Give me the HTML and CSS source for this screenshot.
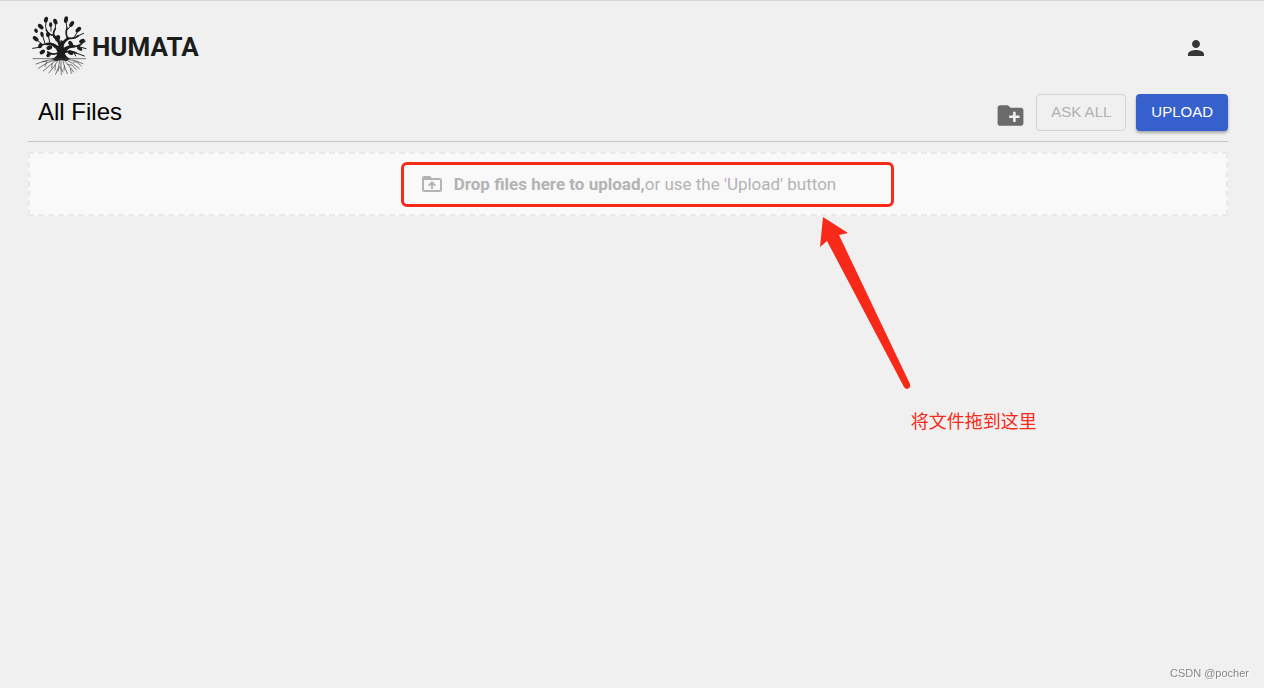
FILE: index.html
```html
<!DOCTYPE html>
<html lang="en">
<head>
  <meta charset="UTF-8">
  <meta name="viewport" content="width=device-width, initial-scale=1.0">
  <title>Humata</title>
  <link rel="stylesheet" href="styles.css">
</head>
<body>
  <header class="topbar">
    <a class="brand" href="#">
      <svg class="brand-logo" viewBox="0 0 192 198" aria-hidden="true">
        <!-- trunk -->
        <path fill="#1c1c1c" d="M72 140 Q88 136 88 121 Q87 111 74 103 L80 97 Q90 105 94 101 Q98 94 98 84 L107 88 Q104 101 108 108 Q116 107 126 99 L131 104 Q114 115 111 124 Q112 134 126 140 L116 147 L99 144 L83 148 Z"/>
        <!-- branches -->
        <g fill="none" stroke="#1c1c1c" stroke-linecap="round">
          <path stroke-width="8" d="M90 109 Q78 94 57 96 M96 105 Q95 86 79 74 M103 101 Q107 86 121 79 M106 112 Q122 102 137 103"/>
          <path stroke-width="5" d="M58 96 Q42 95 34 106 M79 74 Q73 63 82 50 M79 70 Q62 70 55 54 M120 80 Q111 66 117 48 M121 79 Q142 81 151 71 M137 103 Q149 105 160 96 M88 124 Q74 130 59 120 M111 121 Q128 114 144 123"/>
          <path stroke-width="3" d="M55 54 Q51 44 54 30 M82 50 L82 36 M69 57 L69 44 M117 48 L114 30 M117 54 L130 40 M148 73 L167 64 M137 79 L149 58 M160 96 L172 88 M150 103 L174 110 M144 123 L169 132 M34 106 L14 109 M43 97 L26 83 M51 94 L44 72 M66 95 L61 72 M70 126 L62 135 M98 94 L90 82 M137 119 L143 132"/>
        </g>
        <!-- leaves -->
        <g fill="#1c1c1c">
          <ellipse cx="54" cy="23" rx="6" ry="9" transform="rotate(12 54 23)"/>
          <ellipse cx="38" cy="44" rx="6" ry="10" transform="rotate(-45 38 44)"/>
          <ellipse cx="68" cy="38" rx="5" ry="7"/>
          <ellipse cx="82" cy="29" rx="6" ry="9" transform="rotate(-20 82 29)"/>
          <ellipse cx="114" cy="23" rx="6" ry="10" transform="rotate(8 114 23)"/>
          <ellipse cx="131" cy="36" rx="6" ry="10" transform="rotate(32 131 36)"/>
          <ellipse cx="151" cy="53" rx="6" ry="10" transform="rotate(45 151 53)"/>
          <ellipse cx="23" cy="80" rx="6" ry="10" transform="rotate(-50 23 80)"/>
          <ellipse cx="24" cy="56" rx="5" ry="7" transform="rotate(-30 24 56)"/>
          <ellipse cx="42" cy="67" rx="5" ry="8" transform="rotate(-15 42 67)"/>
          <ellipse cx="60" cy="68" rx="6" ry="8" transform="rotate(-10 60 68)"/>
          <ellipse cx="89" cy="79" rx="7" ry="10" transform="rotate(15 89 79)"/>
          <ellipse cx="162" cy="87" rx="6" ry="9" transform="rotate(65 162 87)"/>
          <ellipse cx="128" cy="95" rx="6" ry="9" transform="rotate(-35 128 95)"/>
          <ellipse cx="155" cy="110" rx="5" ry="9" transform="rotate(-60 155 110)"/>
          <ellipse cx="128" cy="122" rx="6" ry="9" transform="rotate(-65 128 122)"/>
          <ellipse cx="64" cy="107" rx="6" ry="9" transform="rotate(65 64 107)"/>
          <ellipse cx="37" cy="101" rx="6" ry="8" transform="rotate(25 37 101)"/>
          <ellipse cx="43" cy="120" rx="6" ry="9" transform="rotate(60 43 120)"/>
          <ellipse cx="61" cy="128" rx="5" ry="8" transform="rotate(35 61 128)"/>
        </g>
        <!-- ground and roots -->
        <g fill="none" stroke="#3a3a3a" stroke-width="2" stroke-linecap="round">
          <path d="M15 140 H173"/>
          <path d="M80 142 Q53 143 24 156 M83 143 Q57 149 31 169 M86 143 Q69 157 46 177 M90 144 Q81 162 63 183 M95 144 Q95 165 83 187 M99 144 Q98 164 100 188 M104 144 Q109 166 118 185 M108 144 Q121 158 137 180 M112 143 Q135 151 154 170 M116 142 Q142 143 165 155"/>
          <path d="M57 148 L43 149 M56 151 L51 163 M72 155 L71 168 M82 159 L81 174 M94 164 L90 177 M98 167 L105 180 M109 163 L108 175 M119 158 L132 159 L145 174 M136 150 L147 150 L160 162 M127 169 L130 184"/>
        </g>
      </svg>
      <span class="brand-name">HUMATA</span>
    </a>
    <button class="icon-button" type="button" aria-label="Account">
      <svg class="icon-person" viewBox="0 0 24 24" aria-hidden="true">
        <path d="M12 12c2.21 0 4-1.79 4-4s-1.79-4-4-4-4 1.79-4 4 1.79 4 4 4zm0 2c-2.67 0-8 1.34-8 4v2h16v-2c0-2.66-5.33-4-8-4z"/>
      </svg>
    </button>
  </header>

  <main class="files">
    <div class="toolbar">
      <h1 class="title">All Files</h1>
      <div class="actions">
        <button class="icon-button new-folder" type="button" aria-label="New folder">
          <svg class="icon-folder" viewBox="0 0 24 24" aria-hidden="true">
            <path d="M20 6h-8l-2-2H4c-1.11 0-1.99.89-1.99 2L2 18c0 1.11.89 2 2 2h16c1.11 0 2-.89 2-2V8c0-1.11-.89-2-2-2zm-1 8h-3v3h-2v-3h-3v-2h3V9h2v3h3v2z"/>
          </svg>
        </button>
        <button class="btn btn-outlined" type="button" disabled>ASK ALL</button>
        <button class="btn btn-primary" type="button">UPLOAD</button>
      </div>
    </div>

    <section class="dropzone">
      <div class="drop-hint">
        <svg class="icon-upload" viewBox="0 0 24 24" aria-hidden="true">
          <path d="M20 6h-8l-2-2H4c-1.1 0-1.99.9-1.99 2L2 18c0 1.1.9 2 2 2h16c1.1 0 2-.9 2-2V8c0-1.1-.9-2-2-2zm0 12H4V8h16v10zM8 13.01l1.41 1.41L11 12.84V17h2v-4.16l1.59 1.59L16 13.01 12.01 9 8 13.01z"/>
        </svg>
        <p class="drop-text"><strong>Drop files here to upload,</strong>or use the 'Upload' button</p>

        <!-- red marks over the drop area -->
        <div class="note-frame"></div>
        <svg class="note-arrow" viewBox="0 0 92 172" aria-hidden="true">
          <path d="M4 0 L29 16 L20 18 L91 167 Q92 171 88 172 Q86 172 85 170 L8 24 L1 30 Z"/>
        </svg>
        <p class="note-text" lang="zh-CN">将文件拖到这里</p>
      </div>
    </section>
  </main>

  <div class="watermark">CSDN @pocher</div>
</body>
</html>
```
FILE: styles.css
```css
* {
  box-sizing: border-box;
  margin: 0;
  padding: 0;
}

body {
  min-height: 100vh;
  background-color: #f0f0f0;
  border-top: 1px solid #d6d6d6;
  color: #000;
  font-family: "Liberation Sans", Arial, sans-serif;
}

.topbar {
  display: flex;
  justify-content: space-between;
  align-items: center;
  padding: 11px 56px 0 28px;
}

.brand {
  display: flex;
  align-items: center;
  color: #1c1c1c;
  text-decoration: none;
}

.brand-logo {
  width: 64px;
  height: 66px;
}

.brand-name {
  padding-top: 4px;
  font-family: Roboto, "Liberation Sans", sans-serif;
  font-size: 26px;
  font-weight: 700;
  line-height: 32px;
}

.icon-button {
  display: flex;
  background: none;
  border: none;
  cursor: pointer;
}

.icon-person {
  width: 24px;
  height: 24px;
  margin-top: 6px;
  fill: #363636;
}

.files {
  padding: 0 36px 0 28px;
}

.toolbar {
  display: flex;
  justify-content: space-between;
  align-items: center;
  padding: 16px 0 10px 10px;
  border-bottom: 1px solid #c6c6c6;
}

.title {
  padding-bottom: 2px;
  font-size: 24px;
  font-weight: 400;
  line-height: 34px;
}

.actions {
  display: flex;
  align-items: center;
  gap: 10px;
}

.new-folder {
  padding-top: 6px;
}

.icon-folder {
  width: 31px;
  height: 31px;
  fill: #6b6b6b;
}

.btn {
  height: 37px;
  padding: 0 14px 2px;
  border: 1px solid transparent;
  border-radius: 4px;
  font-family: inherit;
  font-size: 15px;
  font-weight: 500;
  cursor: pointer;
}

.btn-outlined {
  background: none;
  border-color: #d3d3d3;
  color: #b1b1b1;
  cursor: default;
}

.btn-primary {
  background-color: #3660cb;
  color: #fff;
  box-shadow: 0 2px 3px rgba(0, 0, 0, 0.3);
}

.dropzone {
  display: flex;
  justify-content: center;
  margin-top: 10px;
  padding: 18px 0;
  background-color: #f9f9f9;
  border: 2px dashed #e9e9e9;
}

.drop-hint {
  position: relative;
  display: flex;
  align-items: center;
  gap: 10px;
}

.icon-upload {
  width: 24px;
  height: 24px;
  fill: #b3b3b3;
}

.drop-text {
  color: #b3b3b3;
  font-family: Roboto, "Liberation Sans", sans-serif;
  font-size: 17px;
  line-height: 24px;
}

.note-frame {
  position: absolute;
  top: -10px;
  left: -19px;
  width: 493px;
  height: 45px;
  border: 3px solid #f72918;
  border-radius: 6px;
}

.note-arrow {
  position: absolute;
  top: 45px;
  left: 399px;
  width: 92px;
  height: 172px;
  fill: #f72918;
}

.note-text {
  position: absolute;
  top: 235px;
  left: 491px;
  color: #f72918;
  font-family: "Noto Sans CJK SC", sans-serif;
  font-size: 18px;
  line-height: 26px;
  white-space: nowrap;
}

.watermark {
  position: fixed;
  right: 15px;
  bottom: 8px;
  color: #858585;
  font-size: 11px;
  line-height: 14px;
  text-shadow: 1px 1px 0 #fff;
}
```
